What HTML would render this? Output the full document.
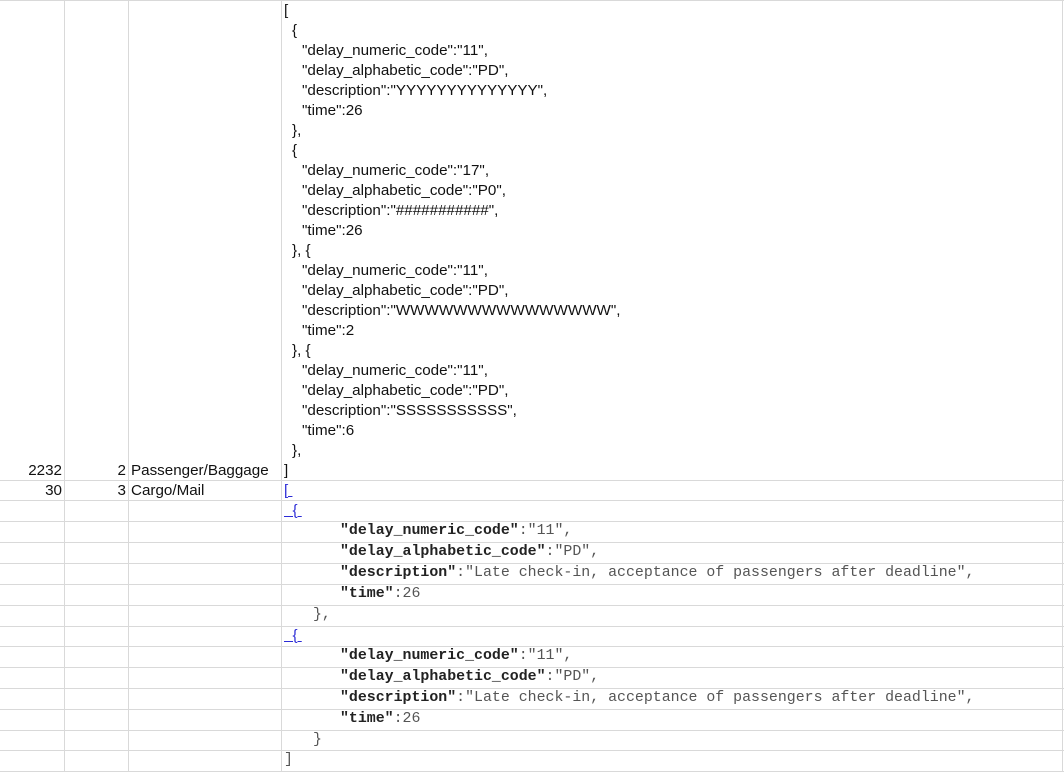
<!DOCTYPE html>
<html><head><meta charset="utf-8"><style>
html,body{margin:0;padding:0;background:#fff;width:1064px;height:772px;overflow:hidden;position:relative}
.v{position:absolute;width:1px;background:#d9d9d9}
.h{position:absolute;height:1px;background:#d9d9d9;left:0;width:1064px}
.s{position:absolute;font-family:"Liberation Sans",sans-serif;font-size:15.2px;color:#111;white-space:pre;line-height:20px}
.blk{position:absolute;font-family:"Liberation Sans",sans-serif;font-size:15.2px;color:#111;white-space:nowrap;line-height:20px}
.blk div{height:20px}
.a{padding-left:8px}.k{padding-left:18px}
.m{position:absolute;font-family:"Liberation Mono",monospace;font-size:14.9px;color:#555;white-space:pre;line-height:21px}
.m b{color:#222}
.r{text-align:right}
.u{color:#2b2bd6;text-decoration:underline}
</style></head><body>
<div class="h" style="top:0"></div>
<div class="v" style="left:64px;top:0;height:772px"></div>
<div class="v" style="left:128px;top:0;height:772px"></div>
<div class="v" style="left:281px;top:0;height:772px"></div>
<div class="v" style="left:1062px;top:0;height:772px"></div>
<div class="h" style="top:480px"></div>
<div class="h" style="top:500px"></div>
<div class="h" style="top:521px"></div>
<div class="h" style="top:542px"></div>
<div class="h" style="top:563px"></div>
<div class="h" style="top:584px"></div>
<div class="h" style="top:605px"></div>
<div class="h" style="top:626px"></div>
<div class="h" style="top:646px"></div>
<div class="h" style="top:667px"></div>
<div class="h" style="top:688px"></div>
<div class="h" style="top:709px"></div>
<div class="h" style="top:730px"></div>
<div class="h" style="top:750px"></div>
<div class="h" style="top:771px"></div>

<div class="blk" style="left:284px;top:1px"><div>[</div><div class="a">{</div><div class="k">"delay_numeric_code":"11",</div><div class="k">"delay_alphabetic_code":"PD",</div><div class="k">"description":"YYYYYYYYYYYYYY",</div><div class="k">"time":26</div><div class="a">},</div><div class="a">{</div><div class="k">"delay_numeric_code":"17",</div><div class="k">"delay_alphabetic_code":"P0",</div><div class="k">"description":"###########",</div><div class="k">"time":26</div><div class="a">}, {</div><div class="k">"delay_numeric_code":"11",</div><div class="k">"delay_alphabetic_code":"PD",</div><div class="k">"description":"WWWWWWWWWWWWWWW",</div><div class="k">"time":2</div><div class="a">}, {</div><div class="k">"delay_numeric_code":"11",</div><div class="k">"delay_alphabetic_code":"PD",</div><div class="k">"description":"SSSSSSSSSSS",</div><div class="k">"time":6</div><div class="a">},</div><div>]</div></div>
<div class="s r" style="left:0;width:62px;top:461px">2232</div>
<div class="s r" style="left:0;width:126px;top:461px">2</div>
<div class="s" style="left:131px;top:461px">Passenger/Baggage</div>
<div class="s r" style="left:0;width:62px;top:481px">30</div>
<div class="s r" style="left:0;width:126px;top:481px">3</div>
<div class="s" style="left:131px;top:481px">Cargo/Mail</div>
<div class="s u" style="left:284px;top:481px">[ </div>
<div class="s u" style="left:284px;top:501px">  { </div>
<div class="m" style="left:340px;top:521px"><b>"delay_numeric_code"</b>:"11",</div>
<div class="m" style="left:340px;top:542px"><b>"delay_alphabetic_code"</b>:"PD",</div>
<div class="m" style="left:340px;top:563px"><b>"description"</b>:"Late check-in, acceptance of passengers after deadline",</div>
<div class="m" style="left:340px;top:584px"><b>"time"</b>:26</div>
<div class="m" style="left:313px;top:605px">},</div>
<div class="s u" style="left:284px;top:626px">  { </div>
<div class="m" style="left:340px;top:646px"><b>"delay_numeric_code"</b>:"11",</div>
<div class="m" style="left:340px;top:667px"><b>"delay_alphabetic_code"</b>:"PD",</div>
<div class="m" style="left:340px;top:688px"><b>"description"</b>:"Late check-in, acceptance of passengers after deadline",</div>
<div class="m" style="left:340px;top:709px"><b>"time"</b>:26</div>
<div class="m" style="left:313px;top:730px">}</div>
<div class="m" style="left:284px;top:750px">]</div>
</body></html>
